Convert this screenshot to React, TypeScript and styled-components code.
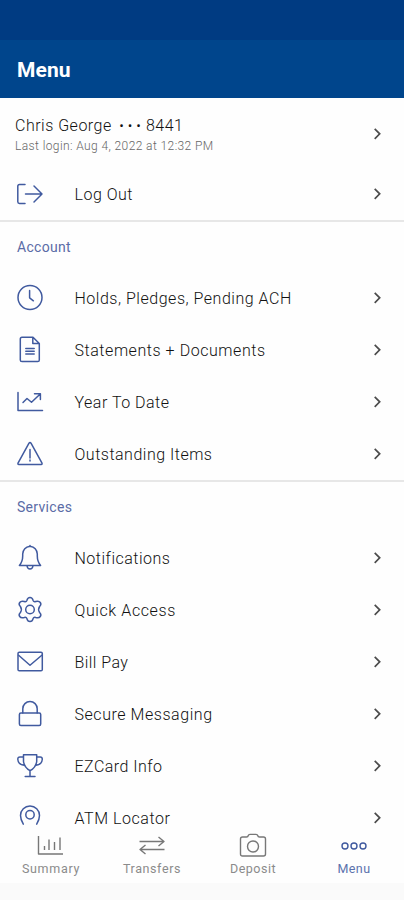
import React from 'react';
import styled, { createGlobalStyle } from 'styled-components';

const GlobalStyle = createGlobalStyle`
  * { box-sizing: border-box; }
  body { margin: 0; background: #fff; font-family: Roboto, "Liberation Sans", sans-serif; }
`;

const Screen = styled.div`
  display: flex;
  flex-direction: column;
  height: 900px;
  overflow: hidden;
  background: #fefefe;
`;

const StatusBar = styled.div`
  flex: none;
  height: 40px;
  background: #003b82;
`;

const Header = styled.header`
  flex: none;
  display: flex;
  align-items: center;
  height: 58px;
  padding: 2px 17px 0;
  background: #00458c;
`;

const Title = styled.h1`
  margin: 0;
  font-size: 21px;
  line-height: 26px;
  font-weight: 700;
  letter-spacing: 0.1px;
  color: #fff;
`;

const List = styled.main`
  flex: none;
  height: 727px;
`;

const Profile = styled.div`
  display: flex;
  align-items: center;
  justify-content: space-between;
  height: 70px;
  padding: 2px 19px 0 15px;
`;

const ProfileText = styled.div`
  padding-top: 3px;
`;

const ProfileName = styled.div`
  display: flex;
  align-items: center;
  height: 22px;
  font-size: 16px;
  font-weight: 300;
  letter-spacing: 0.5px;
  color: #111;
`;

const MaskDots = styled.span`
  margin: 0 1px 0 7.5px;
  font-size: 14px;
  letter-spacing: 4px;
`;

const LastLogin = styled.div`
  height: 20px;
  font-size: 12px;
  line-height: 19px;
  letter-spacing: 0.4px;
  font-weight: 300;
  color: #666;
`;

const Section = styled.section`
  border-bottom: 2px solid #e7e7e7;
  &:last-child { border-bottom: 0; }
`;

const SectionTitle = styled.h2`
  display: flex;
  align-items: center;
  height: 50px;
  margin: 0;
  padding: 0 17px;
  font-size: 14px;
  font-weight: 400;
  letter-spacing: 0.3px;
  color: #5b6ca6;
`;

const Row = styled.div`
  display: flex;
  align-items: center;
  height: 52px;
  padding: 0 19px 0 16px;
`;

const RowLabel = styled.span<{ $spacing: number }>`
  flex: 1;
  padding: 2px 0 0 30.5px;
  font-size: 16px;
  line-height: 16px;
  font-weight: 300;
  letter-spacing: ${(p) => p.$spacing}px;
  color: #111;
`;

const Icon = styled.svg`
  flex: none;
  width: 28px;
  height: 28px;
  fill: none;
  stroke: #405a9f;
  stroke-width: 1.5;
  stroke-linejoin: round;
  stroke-linecap: round;
`;

const ChevronIcon = styled.svg`
  flex: none;
  width: 16px;
  height: 16px;
  fill: none;
  stroke: #4c4c4c;
  stroke-width: 1.7;
`;

const TabBar = styled.nav`
  flex: none;
  display: grid;
  grid-template-columns: repeat(4, 1fr);
  height: 58px;
`;

const Tab = styled.div<{ $active?: boolean }>`
  display: flex;
  flex-direction: column;
  align-items: center;
  padding: 7px 0 0 1px;
  color: ${(p) => (p.$active ? '#405a9f' : '#777')};
`;

const TabIcon = styled.svg`
  width: 28px;
  height: 28px;
  fill: none;
  stroke: currentColor;
  stroke-width: 1.4;
  stroke-linejoin: round;
`;

const TabLabel = styled.span<{ $spacing: number }>`
  font-size: 12.5px;
  line-height: 16px;
  padding-top: 1px;
  letter-spacing: ${(p) => p.$spacing}px;
  opacity: 0.85;
`;

const BottomInset = styled.div`
  flex: 1;
  background: #fafafa;
`;

const icons = {
  logout: (
    <path d="M9 4.500H3.500Q1.800 4.500 1.800 6.200V21.800Q1.800 23.500 3.500 23.500H9M9.500 14H26M18 6l8 8-8 8" />
  ),
  clock: (
    <>
      <circle cx="14" cy="13.500" r="12" />
      <path d="M13.600 6.500v7.300l3.800 3" />
    </>
  ),
  document: (
    <path d="M6 1.200H17l6.300 6.300V24Q23.300 25.600 21.700 25.600H6Q4.300 25.600 4.300 24V3Q4.300 1.200 6 1.200ZM16.800 1.500V7.500H23M9.800 12.500h8.400M9.800 15.200h8.400M9.800 17.900h8.400" />
  ),
  chart: (
    <path d="M2 4.500V22.500H26.500M7 14.500l4-4 4.500 3.800L24.200 6M18.500 5.700h5.900v5.900" />
  ),
  warning: (
    <path d="M13 3.200L2 23.200Q1.600 24.500 2.800 24.500H25.200Q26.400 24.500 26 23.200L15 3.200Q14 1.800 13 3.200ZM14 9.500v8.500M14 20v1" />
  ),
  bell: (
    <path d="M3.400 21.500Q6.700 17.500 6.700 12V10Q7.200 3.500 14 2.300Q20.800 3.500 21.300 10V12Q21.300 17.500 24.600 21.500ZM14 2.300V1.400M11 22Q11.500 25 14 25Q16.500 25 17 22" />
  ),
  gear: (
    <>
      <circle cx="14" cy="13.500" r="4.300" />
      <path d="M10.900 4.400Q11.600 1.400 14 1.400T17.100 4.400Q17.800 6.200 19.700 5.500Q22.900 4.500 24.300 6.500T23.600 10.500Q21.600 13.500 23.600 16.500Q25.700 18.500 24.300 20.500T19.700 21.500Q17.800 20.800 17.100 22.600Q16.400 25.600 14 25.600T10.900 22.600Q10.200 20.800 8.300 21.500Q5.100 22.500 3.700 20.500T4.400 16.500Q6.400 13.500 4.400 10.500Q2.300 8.500 3.700 6.500T8.300 5.500Q10.200 6.200 10.900 4.400Z" />
    </>
  ),
  mail: (
    <>
      <rect x="2" y="4.200" width="24.300" height="18.500" rx="1.300" />
      <path d="M2.600 7.200L14 17.200 25.800 7.200" />
    </>
  ),
  lock: (
    <>
      <rect x="3.400" y="13" width="21.300" height="12.400" rx="1.500" />
      <path d="M6.800 13V8.700a7.200 7.200 0 0 1 14.400 0V13" />
    </>
  ),
  trophy: (
    <path d="M7.500 2.800h13.200v6.700q-.8 6-6.600 9.200Q8.300 15.500 7.500 9.500ZM7.500 5H4Q1.800 5 1.800 7.200Q2.200 12.800 8.200 13.200M20.700 5h3.500q2.100 0 2.100 2.200Q25.800 12.800 20 13.200M14 18.700V24.300M9.200 24.400h9.800" />
  ),
  pin: (
    <>
      <path d="M7.300 20.200Q4.500 15.500 4.500 11.500a9.500 9.500 0 0 1 19 0Q23.500 15.500 20.700 20.200" />
      <circle cx="14" cy="10.800" r="4.200" />
    </>
  ),
};

type IconName = keyof typeof icons;
type Item = { icon: IconName; label: string; spacing: number };

const accountItems: Item[] = [
  { icon: 'clock', label: 'Holds, Pledges, Pending ACH', spacing: 0.52 },
  { icon: 'document', label: 'Statements + Documents', spacing: 0.55 },
  { icon: 'chart', label: 'Year To Date', spacing: 0.5 },
  { icon: 'warning', label: 'Outstanding Items', spacing: 0.5 },
];

const serviceItems: Item[] = [
  { icon: 'bell', label: 'Notifications', spacing: 0.5 },
  { icon: 'gear', label: 'Quick Access', spacing: 0.6 },
  { icon: 'mail', label: 'Bill Pay', spacing: 0.45 },
  { icon: 'lock', label: 'Secure Messaging', spacing: 0.55 },
  { icon: 'trophy', label: 'EZCard Info', spacing: 0.47 },
  { icon: 'pin', label: 'ATM Locator', spacing: 0.55 },
];

const Chevron = () => (
  <ChevronIcon viewBox="0 0 16 16">
    <path d="M5.700 2.800L10.700 7.800 5.700 12.800" />
  </ChevronIcon>
);

const MenuRow = ({ icon, label, spacing }: Item) => (
  <Row>
    <Icon viewBox="0 0 28 28">{icons[icon]}</Icon>
    <RowLabel $spacing={spacing}>{label}</RowLabel>
    <Chevron />
  </Row>
);

export default function App() {
  return (
    <Screen>
      <GlobalStyle />
      <StatusBar />
      <Header>
        <Title>Menu</Title>
      </Header>
      <List>
        <Section>
          <Profile>
            <ProfileText>
              <ProfileName>
                Chris George
                <MaskDots>•••</MaskDots>
                8441
              </ProfileName>
              <LastLogin>Last login: Aug 4, 2022 at 12:32 PM</LastLogin>
            </ProfileText>
            <Chevron />
          </Profile>
          <MenuRow icon="logout" label="Log Out" spacing={0.5} />
        </Section>
        <Section>
          <SectionTitle>Account</SectionTitle>
          {accountItems.map((item) => (
            <MenuRow key={item.label} {...item} />
          ))}
        </Section>
        <Section>
          <SectionTitle>Services</SectionTitle>
          {serviceItems.map((item) => (
            <MenuRow key={item.label} {...item} />
          ))}
        </Section>
      </List>
      <TabBar>
        <Tab>
          <TabIcon viewBox="0 0 28 28">
            <path d="M1.500 4V22H26M7.500 18V14M12 18V7.500M17.500 18V10M23 18V5.500" />
          </TabIcon>
          <TabLabel $spacing={0.7}>Summary</TabLabel>
        </Tab>
        <Tab>
          <TabIcon viewBox="0 0 28 28">
            <path d="M1.500 9.500H26M20.500 5L26 9.500 20.500 14M26.500 17.500H2M7.500 13L2 17.500 7.500 22" />
          </TabIcon>
          <TabLabel $spacing={0.6}>Transfers</TabLabel>
        </Tab>
        <Tab>
          <TabIcon viewBox="0 0 28 28">
            <path d="M3.500 5H7.500Q9 5 9.300 3.500Q9.600 2.400 11 2.400H17Q18.400 2.400 18.700 3.500Q19 5 20.500 5H24.500Q26.500 5 26.500 7V22Q26.500 24 24.500 24H3.500Q1.500 24 1.500 22V7Q1.500 5 3.500 5Z" />
            <circle cx="14" cy="14.500" r="5.500" />
          </TabIcon>
          <TabLabel $spacing={0.5}>Deposit</TabLabel>
        </Tab>
        <Tab $active>
          <TabIcon viewBox="0 0 28 28">
            <circle cx="5" cy="14" r="3" />
            <circle cx="14" cy="14" r="3" />
            <circle cx="23" cy="14" r="3" />
          </TabIcon>
          <TabLabel $spacing={0.4}>Menu</TabLabel>
        </Tab>
      </TabBar>
      <BottomInset />
    </Screen>
  );
}
